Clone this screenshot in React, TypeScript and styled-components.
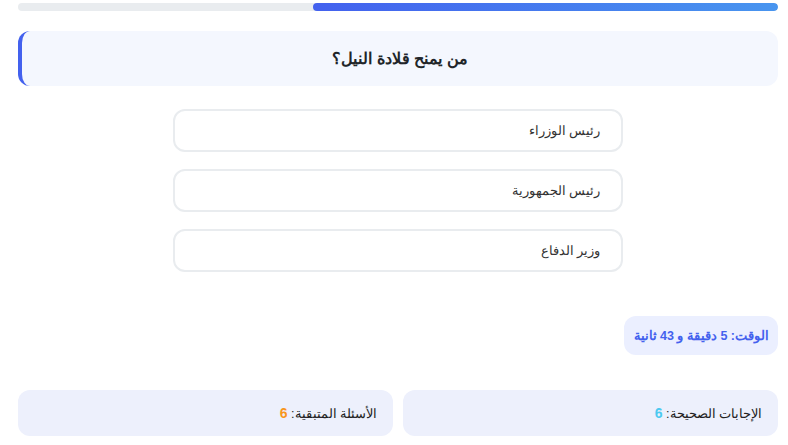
import React from "react";
import styled, { createGlobalStyle } from "styled-components";

const Global = createGlobalStyle`
  html, body { margin: 0; padding: 0; background: #ffffff; }
  body { font-family: "Liberation Sans", Arial, "Noto Sans", sans-serif; }
  * { box-sizing: border-box; }
`;

const Page = styled.div`
  direction: rtl;
  padding: 3px 10px 0 18px;
  width: 788px;
  display: flex;
  flex-direction: column;
`;

const Track = styled.div`
  height: 8px;
  background: #e9ecef;
  border-radius: 4px;
  overflow: hidden;
  display: flex;
`;

const Fill = styled.div`
  height: 100%;
  border-radius: 4px;
  background: linear-gradient(to right, #4361ee, #4895ef);
`;

const QuestionCard = styled.div`
  margin-top: 20px;
  height: 55px;
  background: #f4f7fe;
  border-radius: 12px;
  border-left: 4px solid #4361ee;
  display: flex;
  align-items: center;
  justify-content: center;
  font-size: 16px;
  font-weight: bold;
  color: #212529;
`;

const Options = styled.div`
  margin: 23px auto 0;
  width: 450px;
  display: flex;
  flex-direction: column;
  gap: 17px;
`;

const Option = styled.div`
  height: 43px;
  border: 2px solid #e9ecef;
  border-radius: 12px;
  background: #ffffff;
  display: flex;
  align-items: center;
  padding: 0 21px;
  font-size: 12.5px;
  color: #333333;
`;

const TimerRow = styled.div`
  margin-top: 44px;
  display: flex;
`;

const Timer = styled.div`
  height: 39px;
  padding: 0 9px 0 10px;
  border-radius: 12px;
  background: #ebefff;
  color: #4361ee;
  font-weight: bold;
  font-size: 12.5px;
  display: flex;
  align-items: center;
`;

const Stats = styled.div`
  margin-top: 35px;
  display: grid;
  grid-template-columns: 1fr 1fr;
  gap: 10px;
`;

const Stat = styled.div`
  height: 46px;
  border-radius: 12px;
  background: #edf0fc;
  display: flex;
  align-items: center;
  white-space: pre;
  padding: 0 16px;
  font-size: 12.5px;
  color: #222222;
`;

const Num = styled.span<{ $color: string }>`
  color: ${(p) => p.$color};
  font-weight: bold;
  font-size: 14px;
`;

export default function App() {
  const options = ["رئيس الوزراء", "رئيس الجمهورية", "وزير الدفاع"];
  return (
    <>
      <Global />
      <Page>
        <Track>
          <Fill style={{ width: "61.2%" }} />
        </Track>
        <QuestionCard>من يمنح قلادة النيل؟</QuestionCard>
        <Options>
          {options.map((o) => (
            <Option key={o}>{o}</Option>
          ))}
        </Options>
        <TimerRow>
          <Timer>الوقت: 5 دقيقة و 43 ثانية</Timer>
        </TimerRow>
        <Stats>
          <Stat>
            {"الإجابات الصحيحة: "}
            <Num $color="#4cc9f0">6</Num>
          </Stat>
          <Stat>
            {"الأسئلة المتبقية: "}
            <Num $color="#f8961e">6</Num>
          </Stat>
        </Stats>
      </Page>
    </>
  );
}
